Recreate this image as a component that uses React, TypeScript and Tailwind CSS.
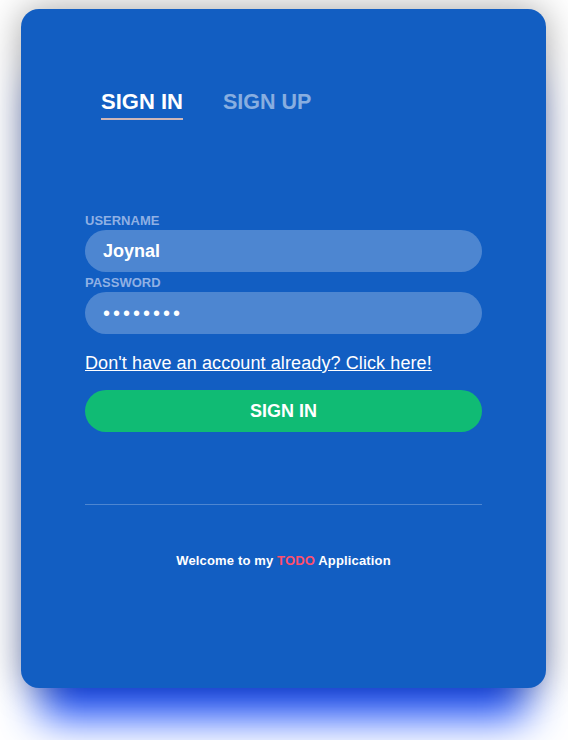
import { useState } from "react";

export default function App() {
  const [username, setUsername] = useState("Joynal");
  const [password, setPassword] = useState("12345678");

  return (
    <div className="min-h-[740px] bg-white pt-[9px] font-['Liberation_Sans',Arial,sans-serif]">
      <div className="ml-[21px] flex h-[679px] w-[525px] flex-col rounded-[18px] bg-[#125ec2] px-16 pt-20 shadow-[0_0_36px_rgba(0,0,0,0.36),0_50px_40px_-20px_#1a50ff]">
        {/* Tabs */}
        <div className="flex gap-[40px] pl-4 pt-[2px]">
          <span className="border-b-2 border-[#cdb6b8] pb-[5px] text-[22px] font-bold leading-[22px] text-white">
            SIGN IN
          </span>
          <span className="pb-[5px] text-[21.5px] font-bold leading-[22px] text-white/50">
            SIGN UP
          </span>
        </div>

        {/* Form */}
        <div className="mt-[93px] flex flex-col">
          <label className="block text-[13px] font-bold leading-[15px] text-[#8fb0e4]">USERNAME</label>
          <input
            value={username}
            onChange={(e) => setUsername(e.target.value)}
            className="mt-[2px] h-[42px] w-full rounded-full bg-white/25 px-[18px] text-[18px] font-semibold text-white outline-none"
          />
          <label className="mt-[3px] block text-[13px] font-bold leading-[15px] text-[#8fb0e4]">PASSWORD</label>
          <input
            type="password"
            value={password}
            onChange={(e) => setPassword(e.target.value)}
            className="mt-[2px] h-[42px] w-full rounded-full bg-white/25 px-[18px] text-[20px] tracking-[3px] text-white outline-none"
          />

          <a href="#" className="mt-[19px] text-[18px] leading-[20px] tracking-[0.1px] text-white underline">
            Don't have an account already? Click here!
          </a>

          <button className="mt-[17px] h-[42px] w-full rounded-full bg-[#10bb74] text-[18px] font-bold text-white">
            SIGN IN
          </button>

          <div className="mt-[72px] h-px w-full bg-white/25" />

          <p className="mt-[48px] text-center text-[13px] font-bold leading-[15px] tracking-[0.15px] text-white">
            Welcome to my <span className="text-[#ff4f6d]">TODO</span> Application
          </p>
        </div>
      </div>
    </div>
  );
}
